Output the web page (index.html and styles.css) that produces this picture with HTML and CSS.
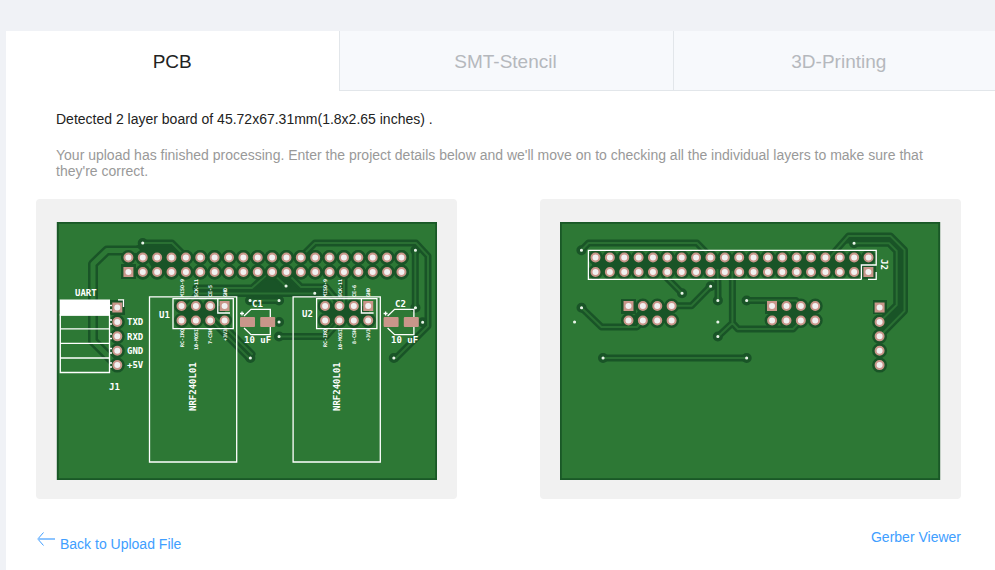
FILE: index.html
```
<!DOCTYPE html>
<html lang="en">
<head>
<meta charset="utf-8">
<title>PCB order</title>
<link rel="stylesheet" href="styles.css">
</head>
<body>
<main class="card">
  <nav class="tabs" aria-label="Product">
    <button class="tab active" type="button">PCB</button>
    <button class="tab" type="button">SMT-Stencil</button>
    <button class="tab" type="button">3D-Printing</button>
  </nav>
  <div class="content">
    <p class="detected">Detected 2 layer board of 45.72x67.31mm(1.8x2.65 inches) .</p>
    <p class="hint">Your upload has finished processing. Enter the project details below and we'll move on to checking all the individual layers to make sure that they're correct.</p>
    <div class="boards">
      <figure class="board">
        <svg viewBox="56 222 381 258" role="img" aria-label="Top layer">
          <defs>
            <path id="front-wide" d="M138 250.500H107L93 264V341L114 362"/>
            <g id="front-traces">
              <path d="M142.7 243H172L186 257M187 306L198 293.5H314.7M196 288H252L270 272M271 272L286 286M286 272L301 287H326L337 300M344 272V305"/>
              <path d="M300.5 257.5L315 243H416L428 256V326L396 358M415.3 250V308M250 300.5H279M279 336.5H326L340 321M211 320L249 358M216 318L252 354"/>
            </g>
            <path id="front-pads" d="M128.4 257.5H402M142.8 272H402M181.5 306H212M181.5 320.5H226M325.1 306H356M325.1 320.5H370M117.3 322V367"/>
            <path id="front-vias" d="M142.7 243h.1M286 286h.1M314.7 293.3h.1M250 300.5h.1M279 300.5h.1M279 322h.1M279 336.5h.1M250.3 358h.1M393.8 358h.1M415.4 250.3h.1M415.4 307.8h.1M422.6 322.2h.1"/>
            <g id="module">
              <path class="silk" d="M149.5 296.8H236.7V462H149.5ZM173 298.7H233.3V328.7H173ZM217.8 299V313H230"/>
              <path class="silk" d="M244 316L251 309.3H270.3V317M244 328L251 334.7H270.3V327M240 313.5H244M242 311.5V315.5"/>
              <rect class="copper" x="240" y="317" width="15" height="10" rx="1"/>
              <rect class="copper" x="260.2" y="317" width="15" height="10" rx="1"/>
            </g>
          </defs>
          <rect class="mask edge" x="57.8" y="222.8" width="378.4" height="256.4"/>
          <use href="#front-wide" class="gap-wide"/>
          <use href="#front-wide" class="trace-wide"/>
          <path class="pour" d="M136 246L143 242L172 244L187 257L192 271H154L143 253ZM252 292L273 272H286L302 286H324L334 296H252ZM181 306H225V321H181ZM325 306H369V321H325Z"/>
          <use href="#front-traces" class="gap"/>
          <use href="#front-pads" class="halo"/>
          <use href="#front-vias" class="via-halo"/>
          <path class="pour" d="M121 264h15v15h-15zM110 300h15v15h-15z"/>
          <use href="#front-traces" class="trace"/>
          <path class="halo" d="M142.8 257.5H402M142.8 272H402"/>
          <use href="#front-pads" class="pad"/>
          <path class="copper" d="M123.4 267h10v10h-10zM112.3 302.5h10v10h-10zM219.6 301h10v10h-10zM363.2 301h10v10h-10z"/>
          <use href="#front-pads" class="hole"/>
          <path class="hole" d="M128.4 272h.1M117.3 307.5h.1M224.6 306h.1M368.2 306h.1"/>
          <use href="#front-vias" class="via"/>
          <use href="#module"/>
          <use href="#module" x="143.6"/>
          <path class="silk" d="M60.3 315H109.5V372.5H60.3ZM60.3 328.8H109.5M60.3 343.4H109.5M60.3 358H109.5M118 299.8H123.5V307M110 305.5H112M110 310H112M110 320H112M110 324H112M110 334H112M110 338.5H112M110 348.5H112M110 353H112M110 363H112M110 367H112"/>
          <rect class="silk-fill" x="59.7" y="299.5" width="50.3" height="16"/>
          <g class="label">
            <text x="75" y="296">UART</text>
            <text x="127" y="325">TXD</text>
            <text x="127" y="340">RXD</text>
            <text x="127" y="354">GND</text>
            <text x="127" y="368">+5V</text>
            <text x="109" y="390">J1</text>
            <text x="159" y="318">U1</text>
            <text x="302" y="317">U2</text>
            <text x="252" y="307">C1</text>
            <text x="395" y="307">C2</text>
            <text x="244" y="343">10 uF</text>
            <text x="391" y="343">10 uF</text>
            <text transform="translate(196 411) rotate(-90)">NRF240L01</text>
            <text transform="translate(340 411) rotate(-90)">NRF240L01</text>
          </g>
          <g class="tiny">
            <text transform="translate(184 297) rotate(-90)">MISO-9</text>
            <text transform="translate(198 297) rotate(-90)">SCK-11</text>
            <text transform="translate(212 297) rotate(-90)">CE-5</text>
            <text transform="translate(227 297) rotate(-90)">GND</text>
            <text transform="translate(184 347) rotate(-90)">RC-IRQ</text>
            <text transform="translate(198 350) rotate(-90)">10-MOSI</text>
            <text transform="translate(212 344) rotate(-90)">7-CSN</text>
            <text transform="translate(227 341) rotate(-90)">+3V3</text>
            <text transform="translate(327 297) rotate(-90)">MISO-9</text>
            <text transform="translate(342 297) rotate(-90)">SCK-11</text>
            <text transform="translate(356 297) rotate(-90)">CE-6</text>
            <text transform="translate(370 297) rotate(-90)">GND</text>
            <text transform="translate(327 347) rotate(-90)">RC-IRQ</text>
            <text transform="translate(342 350) rotate(-90)">10-MOSI</text>
            <text transform="translate(356 344) rotate(-90)">8-CSN</text>
            <text transform="translate(370 341) rotate(-90)">+3V3</text>
          </g>
        </svg>
      </figure>
      <figure class="board">
        <svg viewBox="560 222 381 258" role="img" aria-label="Bottom layer">
          <defs>
            <path id="back-traces" d="M581.4 250.3L588.5 243H697L717.5 264V268L718 286V300.5M666 277L682 293.3M710.6 286.2L691.5 305.7H672M581.5 307.7L601.5 327H637L643 320.5M732.4 272V323L718 336.5M732.4 323L738 329H793L801 320.5M603 358H746.7M746.7 300.5H796L801 306M830 257L848.5 236H890.5L904.5 250V311L880 336M854 243.3H889L896.7 251V305L880 321.5"/>
            <path id="back-pads" d="M595.5 257.5H869M595.5 272H855M642.9 306H673M628.5 320.5H673M786.5 306H817M772.1 320.5H817M879.6 322V367"/>
            <path id="back-vias" d="M581.4 250.3h.1M682 293.3h.1M710.6 286.2h.1M717.8 300.5h.1M581.5 307.7h.1M717.8 336.5h.1M603 358h.1M746.6 358h.1M746.6 300.5h.1M854 243.3h.1"/>
          </defs>
          <rect class="mask edge" x="560.8" y="222.8" width="378.4" height="256.4"/>
          <path class="pour" d="M595 258H869V272H595ZM643 306H672V321H629ZM772 306H815V321H772Z"/>
          <use href="#back-traces" class="gap"/>
          <path class="fill" d="M846 240H890L901 250.5V309L882 329"/>
          <use href="#back-pads" class="halo"/>
          <use href="#back-vias" class="via-halo"/>
          <path class="pour" d="M621 299h15v15h-15zM765 299h15v15h-15zM873 300h14v14h-14zM861 265h15v14h-15z"/>
          <use href="#back-traces" class="trace"/>
          <path class="pour" d="M592 261h280v8h-280z"/>
          <use href="#back-pads" class="pad"/>
          <path class="copper" d="M623.5 301h10v10h-10zM767 301h10v10h-10zM874.6 302.5h10v10h-10zM863.4 267h10v10h-10z"/>
          <use href="#back-pads" class="hole"/>
          <path class="hole" d="M628.5 306h.1M772 306h.1M879.6 307.5h.1M868.4 272h.1"/>
          <use href="#back-vias" class="via"/>
          <path class="via" d="M574.5 322h.1M717.8 322h.1"/>
          <path class="silk" d="M868 279.4H876.2V272M861.4 279.4H588.4V250.3H876.2V265H861.4V279.4"/>
          <g class="label">
            <text transform="translate(881 259) rotate(90)">J2</text>
          </g>
        </svg>
      </figure>
    </div>
    <div class="links">
      <a class="back" href="#upload">
        <svg class="arrow" viewBox="0 0 18 14" aria-hidden="true"><path class="head" d="M6.500 .5L.8 7L6.500 13.500"/><path class="shaft" d="M1 7H18"/></svg>
        <span>Back to Upload File</span>
      </a>
      <a href="#viewer">Gerber Viewer</a>
    </div>
  </div>
</main>
</body>
</html>
```
FILE: styles.css
```
* { box-sizing: border-box; }
html { background: #f0f2f6; }
body {
  margin: 0;
  overflow-x: hidden;
  font: 14px/16px "Liberation Sans", Arial, sans-serif;
  color: #222;
}
.card {
  margin: 31px -11px 0 6px;
  min-height: calc(100vh - 31px);
  background: #fff;
}
.tabs { display: grid; grid-template-columns: repeat(3, 1fr); }
.tab {
  height: 60px;
  padding: 2px 8px 0 6px;
  border: 0;
  border-left: 1px solid #e2e6ea;
  border-bottom: 1px solid #e2e6ea;
  background: #f7f9fc;
  color: #b5b8bd;
  font: 19px/24px "Liberation Sans", Arial, sans-serif;
}
.tab.active { background: #fff; border-color: transparent; color: #222; }
.content { padding: 20px 45px 0 30px; }
.detected, .hint { margin: 0 20px 20px; }
.hint { color: #999; }
.boards { display: flex; justify-content: space-between; gap: 83px; }
.board {
  flex: 1;
  margin: 0;
  padding: 23px 20px 19px;
  border-radius: 4px;
  background: #f1f1f1;
}
.board svg { display: block; width: 100%; }
.links {
  display: flex;
  justify-content: space-between;
  margin-top: 30px;
}
a { color: #409eff; text-decoration: none; }
.back { display: flex; gap: 5px; padding-left: 1px; }
.back span { margin-top: 7px; }
.arrow { width: 18px; height: 14px; margin-top: 3px; fill: none; stroke: #409eff; }
.shaft { stroke-width: 2; stroke: #8cc4ff; }

.mask { fill: #2d7835; }
.edge { stroke: #195827; stroke-width: 2; }
.pour { fill: #195427; }
.gap, .gap-wide, .fill, .trace, .trace-wide, .halo, .pad, .hole, .via-halo, .via, .silk {
  fill: none;
  stroke-linecap: round;
  stroke-linejoin: round;
}
.gap { stroke: #195427; stroke-width: 7; }
.gap-wide { stroke: #195427; stroke-width: 10; }
.fill { stroke: #195427; stroke-width: 7; }
.trace { stroke: #2a7033; stroke-width: 2; }
.trace-wide { stroke: #2d7835; stroke-width: 5; }
.halo { stroke: #195427; stroke-width: 15; stroke-dasharray: 0 14.37; }
.pad { stroke: #c9968a; stroke-width: 10; stroke-dasharray: 0 14.37; }
.hole { stroke: #f1f1f1; stroke-width: 6; stroke-dasharray: 0 14.37; }
.via-halo { stroke: #195427; stroke-width: 10; }
.via { stroke: #e8f3e8; stroke-width: 3; }
.copper { fill: #c9968a; }
.silk { stroke: #fff; stroke-width: 1.3; stroke-linecap: butt; stroke-linejoin: miter; }
.silk-fill { fill: #fff; }
.label { fill: #fff; font: bold 9px "DejaVu Sans Mono", monospace; }
.tiny { fill: #fff; font: bold 5px "DejaVu Sans Mono", monospace; }
```
